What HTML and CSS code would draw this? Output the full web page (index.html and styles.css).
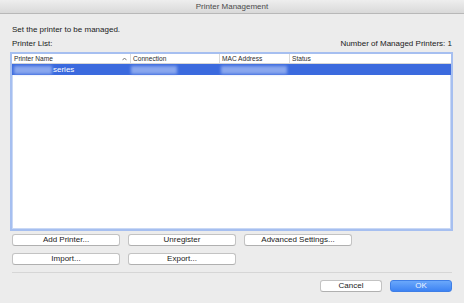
FILE: index.html
```html
<!DOCTYPE html>
<html>
<head>
<meta charset="utf-8">
<link rel="stylesheet" href="styles.css">
</head>
<body>
<div class="window">
  <div class="titlebar">Printer Management</div>
  <div class="content">
    <div class="intro">Set the printer to be managed.</div>
    <div class="listbar">
      <span>Printer List:</span>
      <span>Number of Managed Printers: 1</span>
    </div>
    <div class="table">
      <div class="thead">
        <div class="th c1"><span>Printer Name</span><svg class="sort" width="5" height="4" viewBox="0 0 5 4"><path d="M0.5 3.2 L2.5 1 L4.5 3.2" fill="none" stroke="#6a6a6a" stroke-width="0.9"/></svg></div>
        <div class="th c2">Connection</div>
        <div class="th c3">MAC Address</div>
        <div class="th c4">Status</div>
      </div>
      <div class="row selected">
        <div class="td c1"><span class="blur b1"></span><span>series</span></div>
        <div class="td c2"><span class="blur b2"></span></div>
        <div class="td c3"><span class="blur b3"></span></div>
        <div class="td c4"></div>
      </div>
    </div>
    <div class="btnrow">
      <button class="btn">Add Printer...</button>
      <button class="btn">Unregister</button>
      <button class="btn">Advanced Settings...</button>
    </div>
    <div class="btnrow second">
      <button class="btn">Import...</button>
      <button class="btn">Export...</button>
    </div>
    <div class="sep"></div>
    <div class="footer">
      <button class="btn small">Cancel</button>
      <button class="btn small primary">OK</button>
    </div>
  </div>
</div>
</body>
</html>
```
FILE: styles.css
```css
* { box-sizing: border-box; }
html, body { margin: 0; padding: 0; }
body {
  width: 464px;
  height: 303px;
  overflow: hidden;
  background: #ececec;
  font-family: "Liberation Sans", Arial, sans-serif;
  font-size: 8px;
  color: #1a1a1a;
}
.window { width: 464px; height: 303px; display: flex; flex-direction: column; }
.titlebar {
  height: 14px;
  line-height: 13px;
  text-align: center;
  color: #4a4a4a;
  background: linear-gradient(#eeeeee, #d9d9d9);
  border-bottom: 1px solid #b8b8b8;
}
.content {
  display: flex;
  flex-direction: column;
  padding: 0 11px 0 10px;
}
.intro { margin-top: 11px; padding-left: 2px; line-height: 10px; }
.listbar {
  margin-top: 4px;
  display: flex;
  justify-content: space-between;
  padding: 0 1px 0 2px;
  line-height: 10px;
}
.table {
  margin-top: 3px;
  height: 179px;
  background: #fff;
  border: 2px solid #a6bff0;
  box-shadow: inset 0 0 0 1px #c9d8f5;
}
.thead {
  display: flex;
  height: 10px;
  line-height: 10px;
  font-size: 6.6px;
  color: #2b2b2b;
  border-bottom: 1px solid #d6d6d6;
  background: #fff;
}
.th { padding-left: 2px; }
.c1 { width: 118px; }
.c2 { width: 89px; }
.c3 { width: 70px; }
.c4 { flex: 1; }
.th.c1 { display: flex; justify-content: space-between; align-items: center; padding-right: 3px; }
.th.c2, .th.c3, .th.c4 { border-left: 1px solid #dadada; }
.sort { display: block; }
.row {
  display: flex;
  height: 11px;
  line-height: 11px;
}
.selected { background: #3b6ade; color: #fff; }
.td { display: flex; align-items: center; }
.td.c1 span:last-child { margin-left: 1px; }
.blur {
  display: block;
  height: 8px;
  background: #93aef0;
  filter: blur(1.5px);
  opacity: 0.9;
}
.b1 { width: 38px; margin-left: 2px; }
.b2 { width: 46px; margin-left: 1px; }
.b3 { width: 66px; margin-left: 2px; }
.btnrow {
  display: flex;
  gap: 8px;
  margin-top: 3px;
  padding-left: 2px;
}
.btnrow.second { margin-top: 7px; }
.btn {
  font-family: "Liberation Sans", Arial, sans-serif;
  font-size: 8px;
  color: #1a1a1a;
  width: 108px;
  height: 12px;
  padding: 0;
  line-height: 10px;
  background: #fff;
  border: 1px solid #c3c3c3;
  border-bottom-color: #b0b0b0;
  border-radius: 3px;
}
.sep {
  margin: 7px 1px 0 2px;
  height: 1px;
  background: #d6d6d6;
}
.footer {
  display: flex;
  justify-content: flex-end;
  gap: 8px;
  margin-top: 7px;
  padding-right: 1px;
}
.btn.small { width: 62px; }
.btn.primary {
  color: #eef4ff;
  background: linear-gradient(#6aa8fb, #3d83f3);
  border-color: #3f7fe6;
}
```
